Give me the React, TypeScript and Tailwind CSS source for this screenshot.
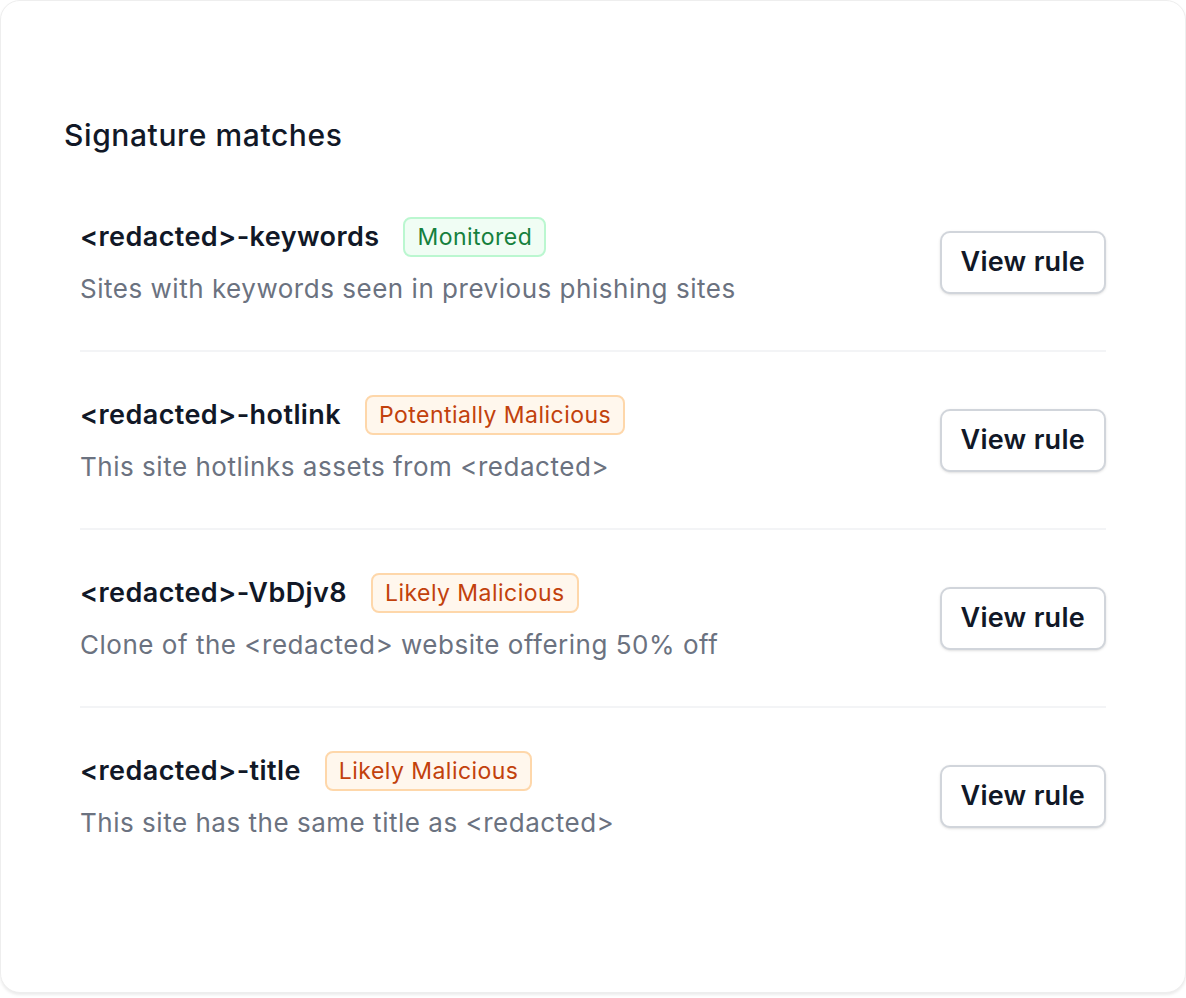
const rows = [
  {
    name: "<redacted>-keywords",
    tag: "Monitored",
    tone: "green",
    desc: "Sites with keywords seen in previous phishing sites",
  },
  {
    name: "<redacted>-hotlink",
    tag: "Potentially Malicious",
    tone: "orange",
    desc: "This site hotlinks assets from <redacted>",
  },
  {
    name: "<redacted>-VbDjv8",
    tag: "Likely Malicious",
    tone: "orange",
    desc: "Clone of the <redacted> website offering 50% off",
  },
  {
    name: "<redacted>-title",
    tag: "Likely Malicious",
    tone: "orange",
    desc: "This site has the same title as <redacted>",
  },
];

function Badge({ tone, children }: { tone: string; children: string }) {
  const cls =
    tone === "green"
      ? "border-[#bbf7d0] bg-[#f0fdf4] text-[#15803d]"
      : "border-[#fed7aa] bg-[#fff7ed] text-[#c2410c]";
  return (
    <span
      className={`inline-flex h-10 items-center rounded-lg border-2 px-3 text-[23px] tracking-[0.02em] font-normal ${cls}`}
    >
      {children}
    </span>
  );
}

export default function App() {
  return (
    <div className="min-h-[998px] bg-white" style={{ fontFamily: "Inter, 'Noto Sans', sans-serif" }}>
      <div className="rounded-[20px] border border-[#eeeeee] bg-white px-[63px] pb-[108px] pt-[116px] shadow-[0_2px_3px_rgba(0,0,0,0.08)]">
        <h2 className="mb-[21px] text-[30px] leading-9 font-medium tracking-[0.02em] text-[#111827]">
          Signature matches
        </h2>
        <ul className="px-4">
          {rows.map((r, i) => (
            <li
              key={r.name}
              className={`flex items-center justify-between py-[43px] ${i < rows.length - 1 ? "border-b-2 border-[#f3f4f6]" : ""}`}
            >
              <div className="flex flex-col gap-3.5">
                <div className="flex items-center gap-6">
                  <span className="text-[27px] leading-9 font-semibold tracking-[0.015em] text-[#111827]">
                    {r.name}
                  </span>
                  <Badge tone={r.tone}>{r.tag}</Badge>
                </div>
                <p className="text-[26px] leading-9 tracking-[0.02em] text-[#6b7280]">{r.desc}</p>
              </div>
              <button className="h-[63px] rounded-[10px] border-2 border-[#d1d5db] bg-white px-[19px] text-[27px] font-semibold tracking-[0.01em] text-[#111827] shadow-sm">
                View rule
              </button>
            </li>
          ))}
        </ul>
      </div>
    </div>
  );
}
